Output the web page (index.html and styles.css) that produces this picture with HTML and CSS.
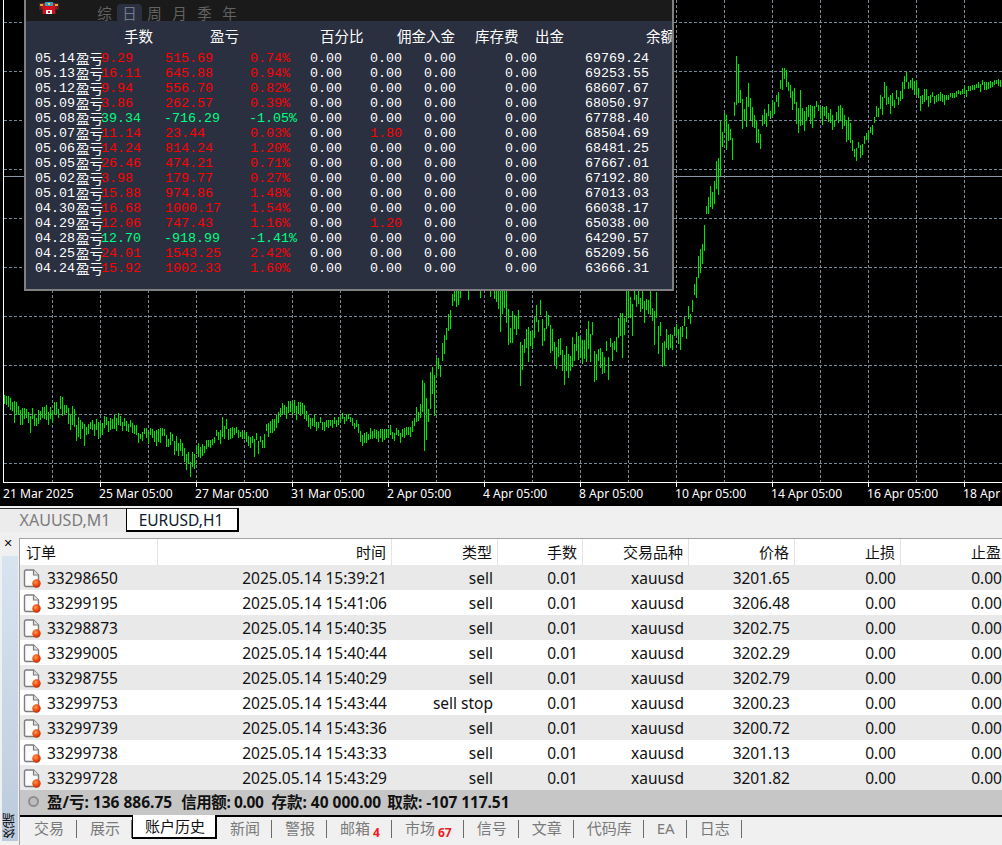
FILE: index.html
```html
<!DOCTYPE html>
<html lang="zh">
<head>
<meta charset="utf-8">
<title>MetaTrader</title>
<link rel="stylesheet" href="styles.css">
</head>
<body>
<main class="app">
  <section class="chart">
    <svg class="chart-svg" id="chart" width="1002" height="506" viewBox="0 0 1002 506"></svg>
    <div class="axis">
      <span class="t0">21 Mar 2025</span><span>25 Mar 05:00</span><span>27 Mar 05:00</span><span>31 Mar 05:00</span><span>2 Apr 05:00</span><span>4 Apr 05:00</span><span>8 Apr 05:00</span><span>10 Apr 05:00</span><span>14 Apr 05:00</span><span>16 Apr 05:00</span><span>18 Apr</span>
    </div>
    <div class="stats">
      <div class="stats-top">
        <svg class="robot" width="22" height="14" viewBox="0 0 22 14">
          <path d="M1 2h4v2h12V2h4v7h-3v4H4V9H1z" fill="#3a2a2a"/>
          <path d="M5 2h12v11H5z" fill="#d0101c"/>
          <path d="M2 3h3v2H2zM17 3h3v2h-3z" fill="#d8b030"/>
          <path d="M3 5h2v3H3zM17 5h2v3h-2z" fill="#b01018"/>
          <path d="M7 1h8v4H7z" fill="#2f9fc4"/>
          <path d="M10 2h2v2h-2z" fill="#e8d040"/>
          <path d="M8 9h6v4H8z" fill="#f4f4f4"/>
          <path d="M10 10h2v2h-2z" fill="#d0101c"/>
        </svg>
        <ul class="periods">
          <li>综</li><li class="on">日</li><li>周</li><li>月</li><li>季</li><li>年</li>
        </ul>
      </div>
      <div class="stats-head">
        <span>手数</span><span>盈亏</span><span>百分比</span><span>佣金入金</span><span>库存费</span><span>出金</span><span>余额</span>
      </div>
      <div class="stats-rows">
        <div class="sr"><span>05.14</span><span class="cn">盈亏</span><span class="r">9.29</span><span class="r">515.69</span><span class="r">0.74%</span><span>0.00</span><span>0.00</span><span>0.00</span><span>0.00</span><span>69769.24</span></div>
        <div class="sr"><span>05.13</span><span class="cn">盈亏</span><span class="r">16.11</span><span class="r">645.88</span><span class="r">0.94%</span><span>0.00</span><span>0.00</span><span>0.00</span><span>0.00</span><span>69253.55</span></div>
        <div class="sr"><span>05.12</span><span class="cn">盈亏</span><span class="r">9.94</span><span class="r">556.70</span><span class="r">0.82%</span><span>0.00</span><span>0.00</span><span>0.00</span><span>0.00</span><span>68607.67</span></div>
        <div class="sr"><span>05.09</span><span class="cn">盈亏</span><span class="r">3.86</span><span class="r">262.57</span><span class="r">0.39%</span><span>0.00</span><span>0.00</span><span>0.00</span><span>0.00</span><span>68050.97</span></div>
        <div class="sr"><span>05.08</span><span class="cn">盈亏</span><span class="g">39.34</span><span class="g neg">-716.29</span><span class="g neg">-1.05%</span><span>0.00</span><span>0.00</span><span>0.00</span><span>0.00</span><span>67788.40</span></div>
        <div class="sr"><span>05.07</span><span class="cn">盈亏</span><span class="r">11.14</span><span class="r">23.44</span><span class="r">0.03%</span><span>0.00</span><span class="r">1.80</span><span>0.00</span><span>0.00</span><span>68504.69</span></div>
        <div class="sr"><span>05.06</span><span class="cn">盈亏</span><span class="r">14.24</span><span class="r">814.24</span><span class="r">1.20%</span><span>0.00</span><span>0.00</span><span>0.00</span><span>0.00</span><span>68481.25</span></div>
        <div class="sr"><span>05.05</span><span class="cn">盈亏</span><span class="r">26.46</span><span class="r">474.21</span><span class="r">0.71%</span><span>0.00</span><span>0.00</span><span>0.00</span><span>0.00</span><span>67667.01</span></div>
        <div class="sr"><span>05.02</span><span class="cn">盈亏</span><span class="r">3.98</span><span class="r">179.77</span><span class="r">0.27%</span><span>0.00</span><span>0.00</span><span>0.00</span><span>0.00</span><span>67192.80</span></div>
        <div class="sr"><span>05.01</span><span class="cn">盈亏</span><span class="r">15.88</span><span class="r">974.86</span><span class="r">1.48%</span><span>0.00</span><span>0.00</span><span>0.00</span><span>0.00</span><span>67013.03</span></div>
        <div class="sr"><span>04.30</span><span class="cn">盈亏</span><span class="r">16.68</span><span class="r">1000.17</span><span class="r">1.54%</span><span>0.00</span><span>0.00</span><span>0.00</span><span>0.00</span><span>66038.17</span></div>
        <div class="sr"><span>04.29</span><span class="cn">盈亏</span><span class="r">12.06</span><span class="r">747.43</span><span class="r">1.16%</span><span>0.00</span><span class="r">1.20</span><span>0.00</span><span>0.00</span><span>65038.00</span></div>
        <div class="sr"><span>04.28</span><span class="cn">盈亏</span><span class="g">12.70</span><span class="g neg">-918.99</span><span class="g neg">-1.41%</span><span>0.00</span><span>0.00</span><span>0.00</span><span>0.00</span><span>64290.57</span></div>
        <div class="sr"><span>04.25</span><span class="cn">盈亏</span><span class="r">24.01</span><span class="r">1543.25</span><span class="r">2.42%</span><span>0.00</span><span>0.00</span><span>0.00</span><span>0.00</span><span>65209.56</span></div>
        <div class="sr"><span>04.24</span><span class="cn">盈亏</span><span class="r">15.92</span><span class="r">1002.33</span><span class="r">1.60%</span><span>0.00</span><span>0.00</span><span>0.00</span><span>0.00</span><span>63666.31</span></div>
      </div>
    </div>
  </section>

  <nav class="chart-tabs">
    <span class="ctab">XAUUSD,M1</span>
    <span class="ctab on">EURUSD,H1</span>
  </nav>

  <section class="terminal">
    <aside class="side">
      <span class="close">✕</span>
      <div class="side-strip"><span class="side-label">终端</span></div>
    </aside>
    <div class="table">
      <div class="row head"><span class="left">订单</span><span>时间</span><span>类型</span><span>手数</span><span>交易品种</span><span>价格</span><span>止损</span><span>止盈</span></div>
      <div class="row"><span class="left id"><svg class="doc" viewBox="0 0 19 19"><use href="#d"/></svg>33298650</span><span>2025.05.14 15:39:21</span><span>sell</span><span>0.01</span><span>xauusd</span><span>3201.65</span><span>0.00</span><span>0.00</span></div>
      <div class="row"><span class="left id"><svg class="doc" viewBox="0 0 19 19"><use href="#d"/></svg>33299195</span><span>2025.05.14 15:41:06</span><span>sell</span><span>0.01</span><span>xauusd</span><span>3206.48</span><span>0.00</span><span>0.00</span></div>
      <div class="row"><span class="left id"><svg class="doc" viewBox="0 0 19 19"><use href="#d"/></svg>33298873</span><span>2025.05.14 15:40:35</span><span>sell</span><span>0.01</span><span>xauusd</span><span>3202.75</span><span>0.00</span><span>0.00</span></div>
      <div class="row"><span class="left id"><svg class="doc" viewBox="0 0 19 19"><use href="#d"/></svg>33299005</span><span>2025.05.14 15:40:44</span><span>sell</span><span>0.01</span><span>xauusd</span><span>3202.29</span><span>0.00</span><span>0.00</span></div>
      <div class="row"><span class="left id"><svg class="doc" viewBox="0 0 19 19"><use href="#d"/></svg>33298755</span><span>2025.05.14 15:40:29</span><span>sell</span><span>0.01</span><span>xauusd</span><span>3202.79</span><span>0.00</span><span>0.00</span></div>
      <div class="row"><span class="left id"><svg class="doc" viewBox="0 0 19 19"><use href="#d"/></svg>33299753</span><span>2025.05.14 15:43:44</span><span>sell stop</span><span>0.01</span><span>xauusd</span><span>3200.23</span><span>0.00</span><span>0.00</span></div>
      <div class="row"><span class="left id"><svg class="doc" viewBox="0 0 19 19"><use href="#d"/></svg>33299739</span><span>2025.05.14 15:43:36</span><span>sell</span><span>0.01</span><span>xauusd</span><span>3200.72</span><span>0.00</span><span>0.00</span></div>
      <div class="row"><span class="left id"><svg class="doc" viewBox="0 0 19 19"><use href="#d"/></svg>33299738</span><span>2025.05.14 15:43:33</span><span>sell</span><span>0.01</span><span>xauusd</span><span>3201.13</span><span>0.00</span><span>0.00</span></div>
      <div class="row"><span class="left id"><svg class="doc" viewBox="0 0 19 19"><use href="#d"/></svg>33299728</span><span>2025.05.14 15:43:29</span><span>sell</span><span>0.01</span><span>xauusd</span><span>3201.82</span><span>0.00</span><span>0.00</span></div>
      <div class="summary"><span class="dot"></span><b class="pl">盈/亏: 136 886.75</b><b class="credit">信用额: 0.00</b><b>存款: 40 000.00</b><b class="withdraw">取款: -107 117.51</b></div>
      <div class="bottom-tabs">
        <span class="btab first">交易</span><span class="btab">展示</span><span class="btab on">账户历史</span><span class="btab">新闻</span><span class="btab">警报</span><span class="btab">邮箱<em>4</em></span><span class="btab">市场<em>67</em></span><span class="btab">信号</span><span class="btab">文章</span><span class="btab">代码库</span><span class="btab">EA</span><span class="btab">日志</span>
      </div>
    </div>
  </section>
</main>
<svg class="defs" width="0" height="0">
  <defs>
    <radialGradient id="ball" cx="0.4" cy="0.35" r="0.7"><stop offset="0" stop-color="#ff9a50"/><stop offset="0.55" stop-color="#ee4a10"/><stop offset="1" stop-color="#b52c06"/></radialGradient>
    <g id="d">
      <path d="M1.5 2.5a1.5 1.5 0 0 1 1.5-1.5h7.5l5 5v10a1.5 1.5 0 0 1-1.5 1.5H3a1.5 1.5 0 0 1-1.5-1.5z" fill="#fbfbfb" stroke="#7d7d80" stroke-width="1.4"/>
      <path d="M10.5 1v5h5" fill="#e0e0e0" stroke="#7d7d80" stroke-width="1.2"/>
      <circle cx="13.5" cy="14.5" r="4.2" fill="url(#ball)"/>
    </g>
  </defs>
</svg>
<script src="chart.js"></script>
</body>
</html>
```

FILE: styles.css
```css
* { box-sizing: border-box; }
html, body { margin: 0; padding: 0; }
body {
  width: 1002px;
  height: 845px;
  overflow: hidden;
  background: #f0f0f0;
  font-family: "Noto Sans", "Noto Sans CJK SC", sans-serif;
  color: #111;
}
.app { display: flex; flex-direction: column; width: 1002px; height: 845px; overflow: hidden; }

/* chart */
.chart { position: relative; flex: 0 0 506px; height: 506px; background: #000; overflow: hidden; }
.chart-svg { display: block; }
.axis {
  position: absolute; left: 3px; top: 486px;
  display: flex; white-space: nowrap;
  font: 12.1px/15px "Noto Sans", sans-serif; color: #fff;
}
.axis span { width: 96px; flex: none; }

/* stats overlay */
.stats {
  position: absolute; left: 24px; top: -2px; width: 650px; height: 293px;
  border: 2px solid #808080; border-top-color: #1a1a1a;
  background: #2a3040; overflow: hidden;
  font-family: "Liberation Mono", "Noto Sans CJK SC", monospace;
  color: #fff;
}
.stats-top { position: relative; height: 21px; background: #1a1a1a; }
.robot { position: absolute; left: 12px; top: 1px; }
.periods {
  list-style: none; margin: 0; padding: 0 0 0 66px;
  display: flex; height: 21px; align-items: flex-end;
  font: 14.5px/17px "Noto Sans CJK SC", sans-serif; color: #626262;
}
.periods li { width: 25px; height: 17px; text-align: center; }
.periods li.on { background: #2a3040; color: #747a88; border-radius: 4px 4px 0 0; }
.stats-head {
  display: grid;
  grid-template-columns: 86px 110px 77px 78px 60px 111px 40px;
  height: 30px; padding-left: 98px;
  font: 14.5px/30px "Noto Sans CJK SC", sans-serif;
  white-space: nowrap;
}
.stats-rows { padding-left: 9px; }
.sr {
  display: grid;
  grid-template-columns: 41px 25px 64px 85px 60px 60px 54px 81px 80px 80px;
  height: 15px;
  font-size: 13.33px; line-height: 15px;
  white-space: nowrap;
}
.sr .cn { font: 13.5px/15px "Noto Sans CJK SC", sans-serif; }
.r { color: #ff0000; }
.g { color: #00ff7f; }
.neg { margin-left: -1px; }

/* chart tabs */
.chart-tabs { display: flex; flex: 0 0 26px; height: 26px; padding: 2px 0 0 0; background: #f0f0f0; }
.ctab {
  width: 126px; height: 24px; padding-left: 4px; text-align: center;
  font-size: 16px; line-height: 22px; color: #7b7b7b;
  border-top: 1px solid #333; background: #ececec;
}
.ctab.on {
  width: 113px; padding: 0 2px 0 0; background: #fff; color: #0e1a2e;
  font-size: 15.5px;
  border: 1px solid #000; border-top-color: #222; border-width: 1px 2px 2px 1px;
}

/* terminal */
.terminal { display: flex; flex: 1 1 auto; min-height: 0; padding-top: 6px; }
.side { flex: 0 0 19px; display: flex; flex-direction: column; }
.close { height: 18px; padding-right: 3px; text-align: center; font: bold 11px/12px "DejaVu Sans", sans-serif; color: #111; }
.side-strip {
  position: relative; margin: 0 1px 0 2px; height: 285px;
  background: linear-gradient(#d8e4f0, #bccbdc);
}
.side-label {
  position: absolute; left: 0; bottom: 3px; width: 16px; text-align: center;
  font: 13px/13px "Noto Sans CJK SC", sans-serif; color: #111;
  writing-mode: vertical-rl; transform: rotate(180deg);
  letter-spacing: -1px;
}
.table { flex: 1 1 auto; min-width: 0; border-top: 1px solid #a3a3a3; border-left: 1px solid #a3a3a3; overflow: hidden; }
.row {
  display: grid;
  grid-template-columns: 138px 234px 106px 85px 106px 106px 106px 106px;
  width: 987px; height: 25px;
  font-size: 15.5px; line-height: 26px; white-space: nowrap;
  color: #111; background: #fff;
}
.row > span { text-align: right; padding-right: 5px; }
.row > span.left { text-align: left; padding: 0 0 0 6px; }
.row > span.id { display: flex; align-items: center; padding-left: 3px; }
.row:nth-child(even) { background: #e9e9e9; }
.row.head { height: 26px; font-size: 15px; line-height: 26px; background: #fff; }
.row.head > span { border-right: 1px solid #e4e4e4; }
.doc { width: 19px; height: 19px; margin-right: 5px; flex: none; }
.summary {
  display: flex; gap: 8px; align-items: center;
  height: 25px; background: #c6c6c6; padding: 0 0 2px 8px;
  font-size: 15.5px; color: #111; white-space: nowrap;
}
.summary b { font-weight: 700; }
.summary .pl { margin-right: 1px; }
.summary .credit { letter-spacing: -0.4px; }
.summary .withdraw { margin-left: -2px; letter-spacing: -0.1px; }
.dot {
  width: 11px; height: 11px; border-radius: 50%; margin-right: 0;
  background: #bdbdbd; border: 2px solid #8f8f8f;
}
.bottom-tabs {
  display: flex; height: 26px; border-top: 2px solid #000; background: #f0f0f0; white-space: nowrap;
}
.btab {
  position: relative; padding: 0 11px 0 13px; height: 18px; margin-top: 3px;
  font-size: 15px; line-height: 17px; color: #7a7a7a;
  border-right: 1px solid #6b6b6b;
}
.btab.first { padding: 0 12px 0 14px; }
.btab.on {
  height: 24px; margin-top: -2px; line-height: 23px; background: #fff; color: #111; padding: 0 10px 0 12px;
  border: 2px solid #000; border-width: 0 2px 2px 1px;
}
.btab em { font: bold 12px/12px "Noto Sans", sans-serif; color: #ee1c25; margin-left: 3px; position: relative; top: 3px; }
.defs { position: absolute; }
```

FILE: chart.js
```js
// Candles drawn as hi-lo bars. Envelope control points: [x, high, low]
var K = [[4,397,405],[10,395,410],[16,394,416],[24,405,425],[30,410,433],[45,405,422],[60,397,420],[68,400,418],[75,413,442],[90,423,433],[105,415,430],[120,413,428],[140,430,440],[160,428,445],[175,432,450],[183,440,460],[190,453,470],[197,445,460],[205,440,452],[215,430,444],[222,417,437],[240,430,437],[252,432,445],[262,437,452],[268,420,437],[275,410,425],[280,404,420],[292,402,415],[302,402,418],[315,417,430],[330,420,427],[345,413,422],[355,420,430],[362,430,443],[375,427,437],[385,425,437],[400,430,440],[410,425,435],[415,413,425],[421,388,425],[424,357,425],[428,385,427],[432,360,410],[436,358,385],[440,360,375],[445,318,347],[450,290,325],[456,262,300],[470,240,290],[480,225,292],[490,240,285],[497,260,310],[504,288,325],[510,297,352],[518,312,350],[523,340,384],[530,317,360],[540,300,343],[550,315,350],[560,337,370],[570,343,373],[580,323,357],[590,320,363],[597,335,372],[605,345,377],[615,327,353],[622,300,340],[628,285,330],[640,285,313],[650,280,320],[656,290,340],[660,322,363],[670,327,347],[680,320,340],[686,318,335],[690,297,327],[695,280,303],[699,250,280],[702,232,262],[705,203,225],[710,188,212],[714,172,205],[718,135,190],[720,87,165],[722,125,152],[725,105,135],[728,100,160],[731,143,168],[734,97,147],[737,35,108],[739,62,88],[741,87,125],[745,97,124],[748,78,122],[750,72,122],[754,107,130],[757,122,150],[760,123,148],[764,107,130],[770,103,123],[775,95,113],[778,78,105],[780,73,100],[782,63,88],[786,65,88],[790,77,95],[795,87,117],[800,90,140],[805,103,120],[810,97,120],[815,103,114],[820,100,117],[830,105,127],[835,115,128],[840,90,120],[845,100,133],[850,120,150],[853,140,158],[860,143,152],[865,137,147],[870,127,140],[875,113,123],[880,87,113],[885,83,107],[890,90,107],[895,93,110],[900,87,107],[905,70,93],[910,78,88],[915,80,100],[920,88,105],[925,90,102],[930,93,103],[935,92,100],[940,93,103],[950,95,98],[955,93,98],[965,87,95],[970,87,93],[975,85,90],[985,80,87],[990,81,87],[1002,80,86]];

(function () {
  function env(x) {
    for (var i = 1; i < K.length; i++) {
      if (x <= K[i][0]) {
        var a = K[i - 1], b = K[i], t = (x - a[0]) / (b[0] - a[0]);
        return [a[1] + (b[1] - a[1]) * t, a[2] + (b[2] - a[2]) * t];
      }
    }
    return [K[K.length - 1][1], K[K.length - 1][2]];
  }
  var seed = 7;
  function rnd() { seed = (seed * 16807) % 2147483647; return seed / 2147483647; }

  var bars = '';
  for (var x = 4; x < 1002; x += 2) {
    var e = env(x), h = e[1] - e[0];
    var hi = e[0] - 2 + rnd() * h * 0.65;
    var lo = hi + 3 + h * (0.2 + rnd() * 0.55);
    if (rnd() < 0.08) lo += h * 0.35;
    bars += 'M' + (x + 0.5) + ' ' + Math.round(hi) + 'V' + Math.round(lo);
  }

  var grid = '';
  for (var y = 22; y < 480; y += 49) grid += 'M4 ' + (y + 0.5) + 'H1002';
  for (var vx = 52; vx < 1002; vx += 48) grid += 'M' + (vx + 0.5) + ' 0V482';

  var ticks = '';
  for (var t = 100; t < 1002; t += 96) ticks += 'M' + (t + 0.5) + ' 483V487';

  document.getElementById('chart').innerHTML =
    '<path d="' + grid + '" stroke="#778899" stroke-dasharray="3 2" fill="none" shape-rendering="crispEdges"/>' +
    '<path d="M4 176.5H1002" stroke="#8896a6" fill="none" shape-rendering="crispEdges"/>' +
    '<path d="' + bars + '" stroke="#00e600" fill="none" shape-rendering="crispEdges"/>' +
    '<path d="M3.5 0V483M3 482.5H1002' + ticks + '" stroke="#fff" fill="none" shape-rendering="crispEdges"/>';
})();
```
